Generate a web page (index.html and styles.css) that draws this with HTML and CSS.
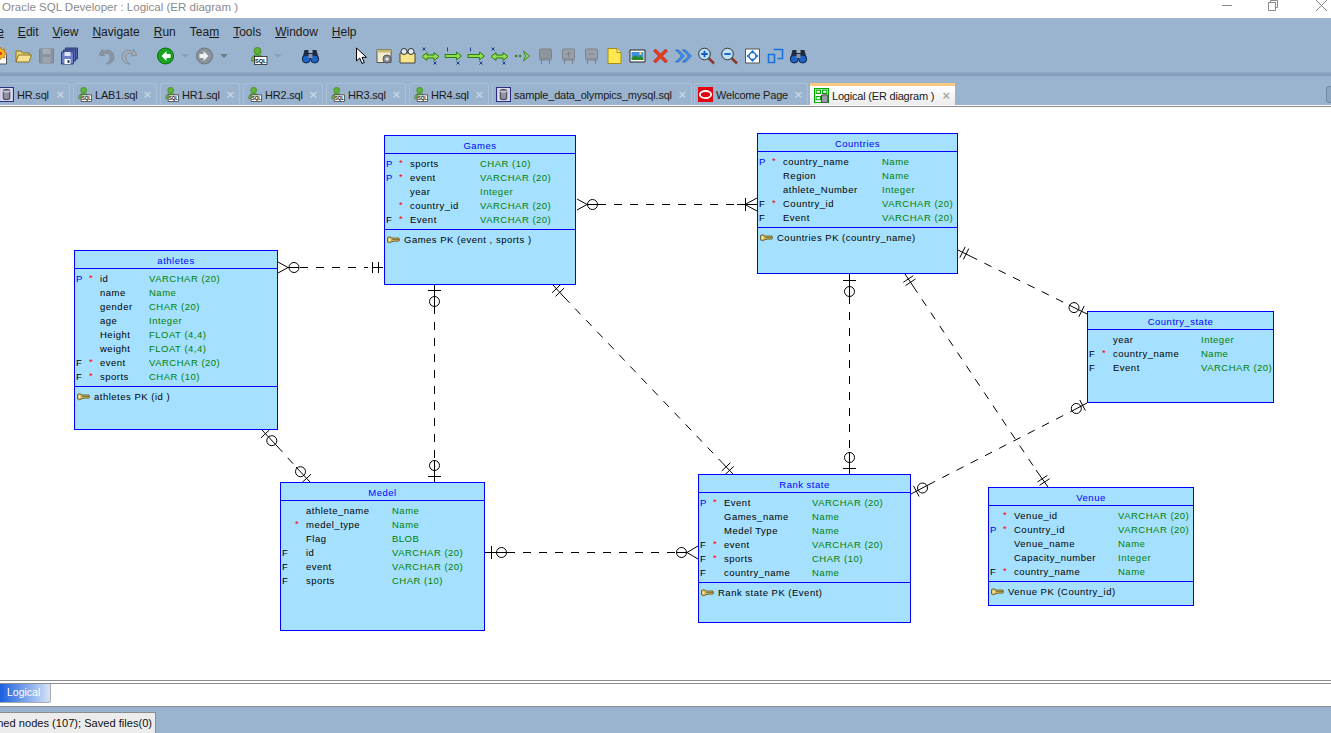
FILE: index.html
```html
<!DOCTYPE html>
<html lang="en">
<head>
<meta charset="utf-8">
<title>Oracle SQL Developer : Logical (ER diagram )</title>
<link rel="stylesheet" href="styles.css">
</head>
<body>
<svg class="defs" width="0" height="0" aria-hidden="true">
  <defs>
    <symbol id="i-new" viewBox="0 0 18 18"><path d="M3 5h9l3 3v9H3z" fill="#fff" stroke="#555"/><path d="M9 0l1.500 3 3-1-1 3 3 1.500-3 1.500 1 3-3-1L9 12.500 7.500 10l-3 1 1-3-3-1.500 3-1.500-1-3 3 1z" fill="#f4c020" stroke="#c25a10" stroke-width=".7"/><circle cx="9" cy="6.500" r="1.800" fill="#e23b1a"/></symbol>
    <symbol id="i-open" viewBox="0 0 18 18"><path d="M1.500 15V4h5l1.500 2h7v2" fill="#e8d27a" stroke="#8a7420"/><path d="M1.500 15l2.500-7h13l-2.500 7z" fill="#f6e394" stroke="#8a7420"/></symbol>
    <symbol id="i-save" viewBox="0 0 18 18"><path d="M2 2h14v14H2z" fill="#8b949e" stroke="#7c8590"/><path d="M5 2h8v5H5z" fill="#a5adb6"/><path d="M5 10h8v6H5z" fill="#9ca4ad"/></symbol>
    <symbol id="i-saveall" viewBox="0 0 18 18"><path d="M5 1h12v11H5z" fill="#4c5fa8" stroke="#2f3d78"/><path d="M3 3h12v11H3z" fill="#5a6db8" stroke="#2f3d78"/><path d="M1 5h12v12H1z" fill="#6e80c8" stroke="#2f3d78"/><path d="M4 5h6v4H4z" fill="#dfe5f5"/><path d="M4 12h6v5H4z" fill="#fff"/><path d="M7 13h2v3H7z" fill="#2f3d78"/></symbol>
    <symbol id="i-undo" viewBox="0 0 18 18"><path d="M5 2L1.500 8l6 1-2-2c4-2 8 0 7 5-.4 2-2 4-4 5 5 0 8-3 8-7 0-6-6-9-11-5z" fill="#8c96a2" stroke="#7d8792" stroke-width=".8"/></symbol>
    <symbol id="i-redo" viewBox="0 0 18 18"><path d="M13 2l3.500 6-6 1 2-2c-4-2-8 0-7 5 .4 2 2 4 4 5-5 0-8-3-8-7 0-6 6-9 11-5z" fill="#a3adb8" stroke="#7d8792" stroke-width=".8"/></symbol>
    <symbol id="i-back" viewBox="0 0 18 18"><circle cx="9" cy="9" r="8" fill="#19a51d" stroke="#0d6b12"/><path d="M10 4L5 9l5 5v-3h4V7h-4z" fill="#fff"/></symbol>
    <symbol id="i-fwd" viewBox="0 0 18 18"><circle cx="9" cy="9" r="8" fill="#8b939c" stroke="#6e767e"/><path d="M8 4l5 5-5 5v-3H4V7h4z" fill="#eef0f2"/></symbol>
    <symbol id="i-sql" viewBox="0 0 18 18"><circle cx="8" cy="4" r="3.600" fill="#5fb437" stroke="#3a7d1f" stroke-width=".7"/><path d="M2 14c0-5 2-6 6-6s6 1 6 6z" fill="#6dbb3f" stroke="#3a7d1f" stroke-width=".7"/><rect x="5" y="9.500" width="12.500" height="8" fill="#fff" stroke="#222" stroke-width=".8"/><text x="11.200" y="15.900" font-size="5.600" font-family="Liberation Sans" font-weight="700" text-anchor="middle" fill="#111">SQL</text></symbol>
    <symbol id="i-bino" viewBox="0 0 18 18"><path d="M3 3h4v3h4V3h4l2 8H1z" fill="#1f2a3c"/><circle cx="4.800" cy="12" r="4" fill="#1f63c8" stroke="#13233f"/><circle cx="13.200" cy="12" r="4" fill="#1f63c8" stroke="#13233f"/><path d="M7 7h4v4H7z" fill="#8a94a2"/></symbol>
    <symbol id="i-cursor" viewBox="0 0 18 18"><path d="M4 1v13l3.200-3 2.300 5.500 2.300-1-2.300-5.200H14z" fill="#fff" stroke="#000"/></symbol>
    <symbol id="i-tpl" viewBox="0 0 18 18"><path d="M1.500 2.500h14v13h-14z" fill="#f6eecb" stroke="#555"/><path d="M1.500 2.500h14v3h-14z" fill="#c8b878"/><circle cx="11.500" cy="12" r="4" fill="#8a8f96" stroke="#555"/><circle cx="11.500" cy="12" r="1.500" fill="#eee"/></symbol>
    <symbol id="i-view" viewBox="0 0 18 18"><path d="M1.500 6h15v10h-15z" fill="#f7e58a" stroke="#444"/><circle cx="5.500" cy="4.500" r="3" fill="#dfeaf4" stroke="#333"/><circle cx="12.500" cy="4.500" r="3" fill="#dfeaf4" stroke="#333"/><path d="M8.500 4.500h1" stroke="#333"/></symbol>
    <symbol id="i-rel" viewBox="0 0 18 18"><path d="M.5 9.500l5-4v2.500h7V5.500l5 4-5 4V11h-7v2.500z" fill="#8fdc4e" stroke="#2e7d14"/><path d="M1 .5l3 3M4 .5l-3 3M12 14.500l3 3M15 14.500l-3 3" stroke="#1f3f96"/></symbol>
    <symbol id="i-relb" viewBox="0 0 18 18"><path d="M.5 7.500h11.500v-2.500l5 4-5 4V10.500H.5z" fill="#8fdc4e" stroke="#2e7d14"/><path d="M3 .5v4M12 14.500l3 3M15 14.500l-3 3" stroke="#1f3f96"/></symbol>
    <symbol id="i-dots" viewBox="0 0 18 18"><circle cx="2.500" cy="9" r="1.300" fill="#2e8a14"/><circle cx="6.500" cy="9" r="1.300" fill="#2e8a14"/><path d="M10 4l6 5-6 5 2-5z" fill="#8ed45a" stroke="#2e7d14" stroke-width=".8"/></symbol>
    <symbol id="i-tbl" viewBox="0 0 18 18"><rect x="3" y="2" width="12" height="10" rx="1" fill="#8f959c" stroke="#7d838a"/><path d="M3 13h12M5 12v5M13 12v5" stroke="#7d838a" fill="none"/></symbol>
    <symbol id="i-tblp" viewBox="0 0 18 18"><rect x="3" y="2" width="12" height="10" rx="1" fill="#99a0a8" stroke="#7d838a"/><path d="M3 13h12M5 12v5M13 12v5M6 7h6M9 4v6" stroke="#7d838a" fill="none"/></symbol>
    <symbol id="i-tblm" viewBox="0 0 18 18"><rect x="3" y="2" width="12" height="10" rx="1" fill="#99a0a8" stroke="#7d838a"/><path d="M3 13h12M5 12v5M13 12v5M6 7h6" stroke="#7d838a" fill="none"/></symbol>
    <symbol id="i-note" viewBox="0 0 18 18"><path d="M2.500 1.500h9l4 4v11h-13z" fill="#ffe94f" stroke="#a58a1b"/><path d="M11.500 1.500v4h4" fill="#fff6b0" stroke="#a58a1b"/></symbol>
    <symbol id="i-img" viewBox="0 0 18 18"><path d="M1.500 3h15v12h-15z" fill="#fff" stroke="#222"/><path d="M3 5h12v6H3z" fill="#3f8fe0"/><path d="M3 13v-2l4-3 3 2 2-1 3 2v2z" fill="#2c8a2a"/><circle cx="12" cy="6.500" r="1.200" fill="#ffe04f"/></symbol>
    <symbol id="i-x" viewBox="0 0 18 18"><path d="M2 4l2-2 5 5 5-5 2 2-5 5 5 5-2 2-5-5-5 5-2-2 5-5z" fill="#ef3a17" stroke="#a81c08" stroke-width=".6"/></symbol>
    <symbol id="i-fwdall" viewBox="0 0 18 18"><path d="M1 3h3l6 6-6 6H1l6-6zM8 3h3l6 6-6 6H8l6-6z" fill="#3c92ec" stroke="#0f4fa8" stroke-width=".6"/></symbol>
    <symbol id="i-zin" viewBox="0 0 18 18"><path d="M11 11l5.500 5.500" stroke="#8a3a2a" stroke-width="2.500"/><circle cx="7" cy="7" r="5.800" fill="#bfe3f6" stroke="#333"/><path d="M3.800 7h6.400M7 3.800v6.400" stroke="#1458c8" stroke-width="1.800"/></symbol>
    <symbol id="i-zout" viewBox="0 0 18 18"><path d="M11 11l5.500 5.500" stroke="#8a3a2a" stroke-width="2.500"/><circle cx="7" cy="7" r="5.800" fill="#bfe3f6" stroke="#333"/><path d="M3.800 7h6.400" stroke="#1458c8" stroke-width="1.800"/></symbol>
    <symbol id="i-fit" viewBox="0 0 18 18"><path d="M2 2h14v14H2z" fill="#fff" stroke="#555"/><circle cx="9" cy="9" r="3.500" fill="none" stroke="#1a6fd8" stroke-width="1.500"/><path d="M9 3l2 2.200H7zM9 15l2-2.200H7zM3 9l2.200-2v4zM15 9l-2.200-2v4z" fill="#1a6fd8"/></symbol>
    <symbol id="i-rest" viewBox="0 0 18 18"><path d="M7 2.500h9v9h-5M2 7.500h6v8H2z" fill="none" stroke="#1a6fd8" stroke-width="1.600"/></symbol>
    <symbol id="i-db" viewBox="0 0 14 14"><path d="M.5.500h13v13H.5z" fill="#d8d8ef" stroke="#2c2c80"/><path d="M4 3.500v7c0 1.500 6 1.500 6 0v-7c0-1.500-6-1.500-6 0z" fill="#8f8fa8" stroke="#444"/><path d="M4 3.500c0 1.500 6 1.500 6 0" fill="none" stroke="#ddd"/></symbol>
    <symbol id="i-ora" viewBox="0 0 16 16"><path d="M0 0h16v16H0z" fill="#e4000f"/><ellipse cx="8" cy="8" rx="6" ry="3.800" fill="none" stroke="#fff" stroke-width="2"/></symbol>
    <symbol id="i-er" viewBox="0 0 14 14"><path d="M.5.500h13v13H.5z" fill="#fff" stroke="#0a0"/><path d="M2 2h4v3H2zM8 2h4v3H8zM2 8h4v3H2z" fill="#fff" stroke="#0a0"/><path d="M7 7v6c0 1 6 1 6 0V7c0-1-6-1-6 0z" fill="#9a9aa8" stroke="#444"/></symbol>
    <symbol id="i-key" viewBox="0 0 13 8"><path d="M.5 1.500C1 .5 4 .5 5 2h7l.5 2.500-1.500 1-1-.8-1 .8-1-.8-1 .8H5C4 7 1 7 .5 6z" fill="#cdb45a" stroke="#5e5420" stroke-width=".8"/><ellipse cx="2.500" cy="3.800" rx="1" ry="1.300" fill="#fff6c8"/><path d="M5 3.500h7" stroke="#5e5420" stroke-width=".6"/></symbol>
  </defs>
</svg>

<header class="titlebar">
  <span class="title-text">Oracle SQL Developer : Logical (ER diagram )</span>
  <div class="win-controls">
    <svg class="win-btn" width="12" height="12" viewBox="0 0 12 12"><path d="M1 5.500h10" stroke="#888"/></svg>
    <svg class="win-btn" width="12" height="12" viewBox="0 0 12 12"><path d="M1.500 2.500h7v8h-7zM3.500 2.500V.500h7v7h-2" fill="none" stroke="#888"/></svg>
    <svg class="win-btn win-close" width="12" height="12" viewBox="0 0 12 12"><path d="M0 0l11 11M11 0L0 11" stroke="#888"/></svg>
  </div>
</header>

<nav class="menubar">
  <span class="menu menu-first">Fil<u>e</u></span>
  <span class="menu"><u>E</u>dit</span>
  <span class="menu"><u>V</u>iew</span>
  <span class="menu"><u>N</u>avigate</span>
  <span class="menu"><u>R</u>un</span>
  <span class="menu">Tea<u>m</u></span>
  <span class="menu"><u>T</u>ools</span>
  <span class="menu"><u>W</u>indow</span>
  <span class="menu"><u>H</u>elp</span>
</nav>

<div class="toolbar">
  <svg class="tool"><use href="#i-new"/></svg>
  <svg class="tool"><use href="#i-open"/></svg>
  <svg class="tool"><use href="#i-save"/></svg>
  <svg class="tool"><use href="#i-saveall"/></svg>
  <svg class="tool sp14"><use href="#i-undo"/></svg>
  <svg class="tool"><use href="#i-redo"/></svg>
  <svg class="tool sp13"><use href="#i-back"/></svg>
  <span class="drop"></span>
  <svg class="tool"><use href="#i-fwd"/></svg>
  <span class="drop drop-dark"></span>
  <svg class="tool sp15"><use href="#i-sql"/></svg>
  <span class="drop"></span>
  <svg class="tool sp13"><use href="#i-bino"/></svg>
  <svg class="tool sp28"><use href="#i-cursor"/></svg>
  <svg class="tool"><use href="#i-tpl"/></svg>
  <svg class="tool"><use href="#i-view"/></svg>
  <svg class="tool"><use href="#i-rel"/></svg>
  <svg class="tool"><use href="#i-relb"/></svg>
  <svg class="tool"><use href="#i-relb"/></svg>
  <svg class="tool"><use href="#i-rel"/></svg>
  <svg class="tool"><use href="#i-dots"/></svg>
  <svg class="tool"><use href="#i-tbl"/></svg>
  <svg class="tool"><use href="#i-tblp"/></svg>
  <svg class="tool"><use href="#i-tblm"/></svg>
  <svg class="tool"><use href="#i-note"/></svg>
  <svg class="tool"><use href="#i-img"/></svg>
  <svg class="tool"><use href="#i-x"/></svg>
  <svg class="tool"><use href="#i-fwdall"/></svg>
  <svg class="tool"><use href="#i-zin"/></svg>
  <svg class="tool"><use href="#i-zout"/></svg>
  <svg class="tool"><use href="#i-fit"/></svg>
  <svg class="tool"><use href="#i-rest"/></svg>
  <svg class="tool"><use href="#i-bino"/></svg>
</div>
<div class="stripe"></div>

<div class="tabbar">
  <div class="tab tab-hr"><svg class="tab-ico"><use href="#i-db"/></svg><span class="tab-label">HR.sql</span><span class="tab-x">×</span></div>
  <div class="tab tab-lab"><svg class="tab-ico"><use href="#i-sql"/></svg><span class="tab-label">LAB1.sql</span><span class="tab-x">×</span></div>
  <div class="tab tab-n"><svg class="tab-ico"><use href="#i-sql"/></svg><span class="tab-label">HR1.sql</span><span class="tab-x">×</span></div>
  <div class="tab tab-n"><svg class="tab-ico"><use href="#i-sql"/></svg><span class="tab-label">HR2.sql</span><span class="tab-x">×</span></div>
  <div class="tab tab-n"><svg class="tab-ico"><use href="#i-sql"/></svg><span class="tab-label">HR3.sql</span><span class="tab-x">×</span></div>
  <div class="tab tab-n"><svg class="tab-ico"><use href="#i-sql"/></svg><span class="tab-label">HR4.sql</span><span class="tab-x">×</span></div>
  <div class="tab tab-sample"><svg class="tab-ico"><use href="#i-db"/></svg><span class="tab-label">sample_data_olympics_mysql.sql</span><span class="tab-x">×</span></div>
  <div class="tab tab-welcome"><svg class="tab-ico"><use href="#i-ora"/></svg><span class="tab-label">Welcome Page</span><span class="tab-x">×</span></div>
  <div class="tab tab-active"><svg class="tab-ico"><use href="#i-er"/></svg><span class="tab-label">Logical (ER diagram )</span><span class="tab-x">×</span></div>
  <span class="tab-more"></span>
</div>

<main class="canvas">
  <svg class="links" viewBox="0 107 1331 573" width="1331" height="573" fill="none" stroke="#000" aria-hidden="true">
    <!-- athletes : Games -->
    <path class="dash" d="M300 267.500H368"/>
    <path d="M278 262l10 5.500-10 5.500M372.500 262v11M378.500 262v11M372 267.500h11"/><path d="M288 267.500h11"/><circle cx="294" cy="267.500" r="5"/>
    <!-- Games : Countries -->
    <path class="dash" d="M598 204.500H737"/>
    <path d="M577 199l10 5.500-10 5.500M587 204.500h11M737 204.500h20M745.500 198v13M757 198l-12 6.500 12 6.500"/><circle cx="592.500" cy="204.500" r="5"/>
    <!-- Games : Medel -->
    <path class="dash" d="M434.500 306V460"/>
    <path d="M428 290.500h13M434.500 285v21M434.500 460v22M428 476.500h13"/><circle cx="434.500" cy="301.500" r="5"/><circle cx="434.500" cy="465.500" r="5"/>
    <!-- Games : Rank state -->
    <path class="dash" d="M564 297L722 462.500"/>
    <path d="M553 285l11 12M722 462.500L733 474M552.100 292.800l8.700-8.400M555.600 296.400l8.600-8.400M725.200 474.500l8.600-8.200M721.800 470.900l8.600-8.200"/>
    <!-- Countries : Rank state -->
    <path class="dash" d="M849.500 296V452"/>
    <path d="M843 280.500h13M849.500 274v22M849.500 452v22M843 468.500h13"/><circle cx="849.500" cy="291.500" r="5"/><circle cx="849.500" cy="457.500" r="5"/>
    <!-- Countries : Venue -->
    <path class="dash" d="M913 286L1036 470"/>
    <path d="M905 274l8 12M1036 470l12 17M903.300 282.300l10-6.600M905.500 285.600l10-6.600M1037.400 482l10-6.600M1039.600 485.300l10-6.600"/>
    <!-- Countries : Country_state -->
    <path class="dash" d="M970 256L1069 305"/>
    <path d="M958 250l12 6M1069 305l18 9M959.800 257.600l5.400-10.800M963.400 259.400l5.400-10.800M1078.900 316.700l5.400-10.800"/><circle cx="1074" cy="307.600" r="5"/>
    <!-- Country_state : Rank state -->
    <path class="dash" d="M928 485L1072 411"/>
    <path d="M911 494l17-9M1072 411l15-8M913.500 485.900l5.600 10.600M1079.800 400l5.600 10.600"/><circle cx="922.500" cy="488" r="5"/><circle cx="1076.300" cy="408.500" r="5"/>
    <!-- athletes : Medel -->
    <path class="dash" d="M277 446L296 467"/>
    <path d="M262 430l15 16M296 467l14 15M261 437.800l8.800-8.200M302.200 482.400l8.800-8.200"/><circle cx="271.800" cy="440.700" r="5"/><circle cx="300.500" cy="471.700" r="5"/>
    <!-- Medel : Rank state -->
    <path class="dash" d="M507 552.500H676"/>
    <path d="M485 552.500h22M491.500 546v13M676 552.500h11M698 546l-11 6.500 11 6.500"/><circle cx="501.500" cy="552.500" r="5"/><circle cx="681.500" cy="552.500" r="5"/>
  </svg>

  <section class="entity e-athletes">
    <h3 class="e-title">athletes</h3>
    <div class="rows">
      <div class="row"><span class="p">P</span><span class="star">*</span><span class="name">id</span><span class="type">VARCHAR (20)</span></div>
      <div class="row"><span></span><span></span><span class="name">name</span><span class="type">Name</span></div>
      <div class="row"><span></span><span></span><span class="name">gender</span><span class="type">CHAR (20)</span></div>
      <div class="row"><span></span><span></span><span class="name">age</span><span class="type">Integer</span></div>
      <div class="row"><span></span><span></span><span class="name">Height</span><span class="type">FLOAT (4,4)</span></div>
      <div class="row"><span></span><span></span><span class="name">weight</span><span class="type">FLOAT (4,4)</span></div>
      <div class="row"><span class="f">F</span><span class="star">*</span><span class="name">event</span><span class="type">VARCHAR (20)</span></div>
      <div class="row"><span class="f">F</span><span class="star">*</span><span class="name">sports</span><span class="type">CHAR (10)</span></div>
    </div>
    <div class="pk"><svg class="key"><use href="#i-key"/></svg><span>athletes PK (id )</span></div>
  </section>

  <section class="entity e-games">
    <h3 class="e-title">Games</h3>
    <div class="rows">
      <div class="row"><span class="p">P</span><span class="star">*</span><span class="name">sports</span><span class="type">CHAR (10)</span></div>
      <div class="row"><span class="p">P</span><span class="star">*</span><span class="name">event</span><span class="type">VARCHAR (20)</span></div>
      <div class="row"><span></span><span></span><span class="name">year</span><span class="type">Integer</span></div>
      <div class="row"><span></span><span class="star">*</span><span class="name">country_id</span><span class="type">VARCHAR (20)</span></div>
      <div class="row"><span class="f">F</span><span class="star">*</span><span class="name">Event</span><span class="type">VARCHAR (20)</span></div>
    </div>
    <div class="pk"><svg class="key"><use href="#i-key"/></svg><span>Games PK (event , sports )</span></div>
  </section>

  <section class="entity e-countries">
    <h3 class="e-title">Countries</h3>
    <div class="rows">
      <div class="row"><span class="p">P</span><span class="star">*</span><span class="name">country_name</span><span class="type">Name</span></div>
      <div class="row"><span></span><span></span><span class="name">Region</span><span class="type">Name</span></div>
      <div class="row"><span></span><span></span><span class="name">athlete_Number</span><span class="type">Integer</span></div>
      <div class="row"><span class="f">F</span><span class="star">*</span><span class="name">Country_id</span><span class="type">VARCHAR (20)</span></div>
      <div class="row"><span class="f">F</span><span></span><span class="name">Event</span><span class="type">VARCHAR (20)</span></div>
    </div>
    <div class="pk"><svg class="key"><use href="#i-key"/></svg><span>Countries PK (country_name)</span></div>
  </section>

  <section class="entity e-state">
    <h3 class="e-title">Country_state</h3>
    <div class="rows rows-open">
      <div class="row"><span></span><span></span><span class="name">year</span><span class="type">Integer</span></div>
      <div class="row"><span class="f">F</span><span class="star">*</span><span class="name">country_name</span><span class="type">Name</span></div>
      <div class="row"><span class="f">F</span><span></span><span class="name">Event</span><span class="type">VARCHAR (20)</span></div>
    </div>
  </section>

  <section class="entity e-medel">
    <h3 class="e-title">Medel</h3>
    <div class="rows rows-open">
      <div class="row"><span></span><span></span><span class="name">athlete_name</span><span class="type">Name</span></div>
      <div class="row"><span></span><span class="star">*</span><span class="name">medel_type</span><span class="type">Name</span></div>
      <div class="row"><span></span><span></span><span class="name">Flag</span><span class="type">BLOB</span></div>
      <div class="row"><span class="f">F</span><span></span><span class="name">id</span><span class="type">VARCHAR (20)</span></div>
      <div class="row"><span class="f">F</span><span></span><span class="name">event</span><span class="type">VARCHAR (20)</span></div>
      <div class="row"><span class="f">F</span><span></span><span class="name">sports</span><span class="type">CHAR (10)</span></div>
    </div>
  </section>

  <section class="entity e-rank">
    <h3 class="e-title">Rank state</h3>
    <div class="rows">
      <div class="row"><span class="p">P</span><span class="star">*</span><span class="name">Event</span><span class="type">VARCHAR (20)</span></div>
      <div class="row"><span></span><span></span><span class="name">Games_name</span><span class="type">Name</span></div>
      <div class="row"><span></span><span></span><span class="name">Medel Type</span><span class="type">Name</span></div>
      <div class="row"><span class="f">F</span><span class="star">*</span><span class="name">event</span><span class="type">VARCHAR (20)</span></div>
      <div class="row"><span class="f">F</span><span class="star">*</span><span class="name">sports</span><span class="type">CHAR (10)</span></div>
      <div class="row"><span class="f">F</span><span></span><span class="name">country_name</span><span class="type">Name</span></div>
    </div>
    <div class="pk"><svg class="key"><use href="#i-key"/></svg><span>Rank state PK (Event)</span></div>
  </section>

  <section class="entity e-venue">
    <h3 class="e-title">Venue</h3>
    <div class="rows">
      <div class="row"><span></span><span class="star">*</span><span class="name">Venue_id</span><span class="type">VARCHAR (20)</span></div>
      <div class="row"><span class="p">P</span><span class="star">*</span><span class="name">Country_id</span><span class="type">VARCHAR (20)</span></div>
      <div class="row"><span></span><span></span><span class="name">Venue_name</span><span class="type">Name</span></div>
      <div class="row"><span></span><span></span><span class="name">Capacity_number</span><span class="type">Integer</span></div>
      <div class="row"><span class="f">F</span><span class="star">*</span><span class="name">country_name</span><span class="type">Name</span></div>
    </div>
    <div class="pk"><svg class="key"><use href="#i-key"/></svg><span>Venue PK (Country_id)</span></div>
  </section>
</main>

<div class="page-tabs">
  <div class="page-tab">Logical</div>
</div>

<footer class="statusbar">
  <div class="status-tab"><span>ned nodes (107); Saved files(0)</span></div>
</footer>
</body>
</html>
```

FILE: styles.css
```css
* { box-sizing: border-box; }
html, body { margin: 0; padding: 0; }
body {
  width: 1331px;
  height: 733px;
  overflow: hidden;
  display: flex;
  flex-direction: column;
  background: #fff;
  font-family: "Liberation Sans", Arial, sans-serif;
  color: #111;
}
.defs { position: absolute; }

/* title bar */
.titlebar {
  height: 18px;
  flex: none;
  display: flex;
  justify-content: space-between;
  background: #fff;
  overflow: hidden;
}
.title-text {
  margin: -1px 0 0 2px;
  font-size: 11.500px;
  line-height: 16px;
  color: #8a8a8a;
  white-space: nowrap;
}
.win-controls { display: flex; margin-right: 1px; }
.win-btn { margin-left: 34px; overflow: visible; }
.win-close { margin-left: 35px; width: 16px; height: 12px; }

/* menu */
.menubar {
  height: 25px;
  flex: none;
  display: flex;
  align-items: center;
  gap: 14px;
  background: #9ab4cf;
  font-size: 12px;
  color: #1a1a1a;
  padding-top: 2px;
  white-space: nowrap;
}
.menu-first { margin-left: -15.500px; }

/* toolbar */
.toolbar {
  height: 29px;
  width: 1342px;
  flex: none;
  display: flex;
  align-items: center;
  background: #9ab4cf;
  margin-left: -11px;
  padding-bottom: 3px;
}
.tool {
  width: 23px;
  height: 18px;
  flex: none;
}
.sp13 { margin-left: 13px; }
.sp14 { margin-left: 14px; }
.sp15 { margin-left: 15px; }
.sp28 { margin-left: 28px; }
.drop {
  flex: none;
  width: 16px;
  display: flex;
  justify-content: center;
}
.drop::before {
  content: "";
  border-left: 4px solid transparent;
  border-right: 4px solid transparent;
  border-top: 4px solid #8aa0b8;
}
.drop-dark::before { border-top-color: #6f7b88; }
.stripe {
  height: 4px;
  flex: none;
  background: linear-gradient(#8fa9c5, #7f9aba);
}

/* tabs */
.tabbar {
  height: 31px;
  width: 1340px;
  flex: none;
  display: flex;
  align-items: flex-start;
  gap: 3px;
  margin-left: -9px;
  padding-top: 7px;
  background: linear-gradient(#9ab4cf 0 29px, #fff 29px 30px, #8a8a8a 30px);
  position: relative;
  font-size: 11px;
  letter-spacing: -.2px;
}
.tab {
  height: 22px;
  flex: none;
  display: flex;
  align-items: center;
  padding: 0 5px 0 3px;
  border: 1px solid #a9c0d8;
  border-bottom: 0;
  border-radius: 3px 3px 0 0;
  background: #9ab4cf;
  color: #1a1a1a;
}
.tab-ico { width: 15px; height: 15px; flex: none; margin-right: 3px; }
.tab-label { flex: 1; white-space: nowrap; }
.tab-x { color: #c5d3e2; font-size: 13px; font-weight: 700; line-height: 12px; margin-left: 6px; }
.tab-hr { width: 79px; padding-left: 7px; }
.tab-lab { width: 84px; }
.tab-n { width: 80px; }
.tab-sample { width: 200px; }
.tab-welcome { width: 114px; margin-left: -1px; }
.tab-active {
  width: 145px;
  margin-left: -1px;
  border: 0;
  border-top: 3px solid #f8ca80;
  border-radius: 0;
  background: linear-gradient(#fff, #ececec);
  padding-left: 4px;
}
.tab-active .tab-x { color: #aaa; }
.tab-more {
  position: absolute;
  right: -4px;
  top: 10px;
  width: 9px;
  height: 17px;
  background: #8ba4c0;
  border: 1px solid #7089a6;
  border-radius: 3px;
  display: block;
}

/* diagram canvas */
.canvas {
  height: 573px;
  flex: none;
  position: relative;
  background: #fff;
  overflow: hidden;
}
.links { position: absolute; left: 0; top: 0; }
.dash { stroke-dasharray: 8 8; }
.entity {
  position: absolute;
  border: 1px solid #0000ff;
  background: #a5e0ff;
  font-size: 9.500px;
  letter-spacing: .5px;
  line-height: 14px;
  display: flex;
  flex-direction: column;
  white-space: nowrap;
}
.e-title {
  margin: 0;
  height: 18px;
  flex: none;
  padding-top: 2px;
  border-bottom: 1px solid #0000ff;
  color: #0000ff;
  font-size: 9.500px;
  font-weight: 400;
  line-height: 16px;
  text-align: center;
}
.rows {
  flex: none;
  padding: 3px 0 2px 1px;
  border-bottom: 1px solid #0000ff;
}
.rows-open { border-bottom: 0; }
.row {
  height: 14px;
  display: grid;
  grid-template-columns: 13px 11px var(--name-w) 1fr;
}
.p { color: #0000ff; }
.f { color: #000; }
.star { color: #ff0000; line-height: 11px; }
.name { color: #000; }
.type { color: #008000; }
.pk {
  display: flex;
  align-items: center;
  height: 14px;
  margin-top: 3px;
  padding-left: 2px;
  color: #000;
}
.key { width: 13px; height: 8px; flex: none; margin-right: 4px; }

.e-athletes { left: 74px; top: 143px; width: 204px; height: 180px; --name-w: 49px; }
.e-games { left: 384px; top: 28px; width: 192px; height: 150px; --name-w: 70px; }
.e-countries { left: 757px; top: 26px; width: 201px; height: 141px; --name-w: 99px; }
.e-state { left: 1087px; top: 204px; width: 187px; height: 92px; --name-w: 88px; }
.e-medel { left: 280px; top: 375px; width: 205px; height: 149px; --name-w: 86px; }
.e-rank { left: 698px; top: 367px; width: 213px; height: 149px; --name-w: 88px; }
.e-venue { left: 988px; top: 380px; width: 206px; height: 119px; --name-w: 104px; }

/* page tabs under the diagram */
.page-tabs {
  height: 26px;
  flex: none;
  background: #fff;
  border-top: 1px solid #8c8c8c;
  padding-top: 2px;
}
.page-tabs::before {
  content: "";
  display: block;
  height: 1px;
  background: #8c8c8c;
}
.page-tab {
  width: 51px;
  height: 19px;
  padding-left: 7px;
  background: linear-gradient(90deg, #1a5fe0, #d5e4f6);
  border-right: 1px solid #aaa;
  border-bottom: 1px solid #aaa;
  border-radius: 0 0 3px 0;
  color: #fff;
  font-size: 10.500px;
  line-height: 17px;
}

/* status bar */
.statusbar {
  flex: 1;
  background: #9ab4cf;
  border-top: 1px solid #8c8c8c;
  padding-top: 5px;
}
.status-tab {
  width: 156px;
  height: 22px;
  background: #ececec;
  border: 1px solid #8c8c8c;
  border-left: 0;
  border-bottom: 0;
  display: flex;
  justify-content: flex-end;
  overflow: hidden;
  font-size: 11.100px;
  line-height: 21px;
  white-space: nowrap;
  padding-right: 3px;
}
```
